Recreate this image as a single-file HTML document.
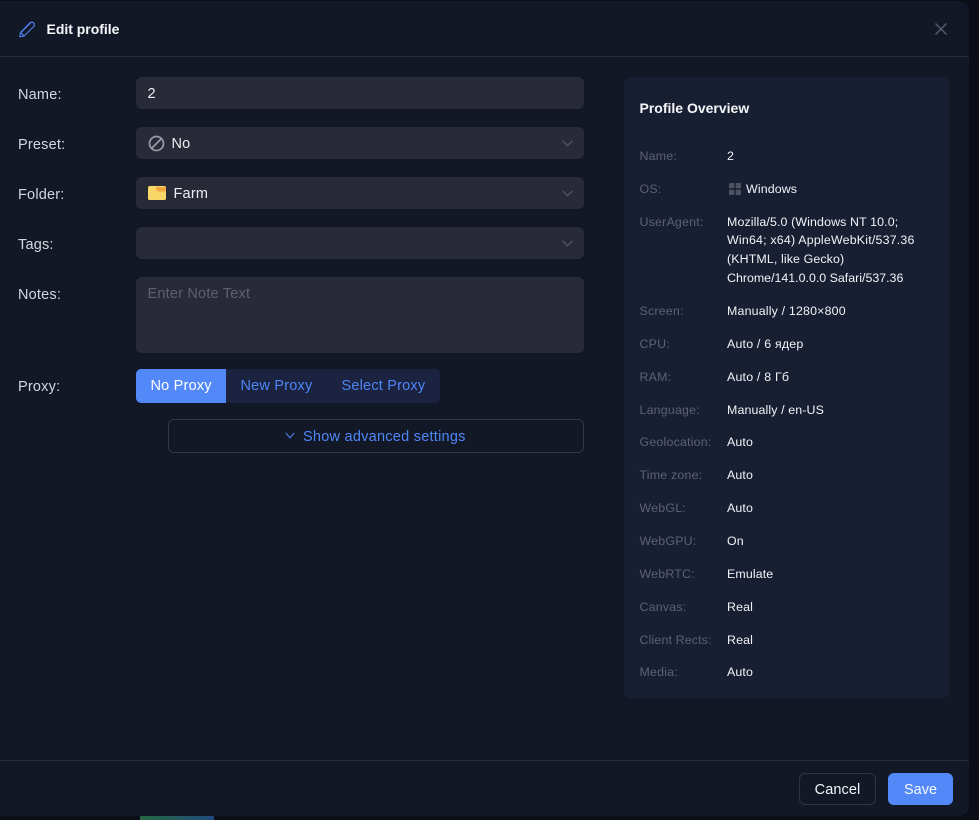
<!DOCTYPE html>
<html><head><meta charset="utf-8">
<style>
html,body{margin:0;padding:0;width:979px;height:820px;overflow:hidden;background:#0b0e16;font-family:"Liberation Sans",sans-serif}
.a{position:absolute;white-space:nowrap}
#modal{position:absolute;left:-10px;top:1px;width:979px;height:815px;background:#121826;border-radius:10px}
.line{position:absolute;left:0;width:969px;height:1px;background:#272b3c}
.lbl{color:#d5d7de;font-size:14.5px;left:18px;letter-spacing:.2px;line-height:18px}
.inp{position:absolute;left:136px;width:448px;height:32px;background:#282b37;border-radius:6px}
.v{color:#eceef2;font-size:14.5px;letter-spacing:.2px;line-height:18px}
.k{color:#5c6178;font-size:12.4px;left:639.5px;line-height:16px;letter-spacing:.2px}
.d{color:#f2f3f6;font-size:12.4px;left:727px;line-height:16px;letter-spacing:.12px}
.seg{color:#4f86f7;font-size:14.5px;letter-spacing:.2px;line-height:18px}
.chev{left:561.5px}
</style></head><body>
<div class="a" style="left:140px;top:816px;width:74px;height:4px;background:linear-gradient(90deg,#25693f,#20497e)"></div>
<div id="modal"></div>
<div class="line" style="top:56px"></div>
<div class="line" style="top:760px"></div>

<svg class="a" style="left:19px;top:21px" width="17" height="17" viewBox="0 0 17 17" fill="none" stroke="#4f7fe8" stroke-width="1.2" stroke-linejoin="round" stroke-linecap="round"><path d="M.8 15.7l.8-4.300L11 1.800a2.400 2.400 0 0 1 3.400 0l.3.300a2.400 2.400 0 0 1 0 3.400L5.100 15z"/><path d="M1.700 11.300l3.300 3.600M3 10.500l8.500-8.500"/></svg>
<div class="a" style="left:46.5px;top:20px;color:#f7f8fa;font-size:14px;font-weight:700;line-height:18px;letter-spacing:-.02px">Edit profile</div>
<svg class="a" style="left:934px;top:22px" width="14" height="14" viewBox="0 0 14 14" stroke="#565b6e" stroke-width="1.5" fill="none"><path d="M1.500 1.500l11 11M12.500 1.500l-11 11"/></svg>

<div class="a lbl" style="top:86px">Name:</div>
<div class="inp" style="top:77px"></div>
<div class="a v" style="left:147.5px;top:84.500px">2</div>

<div class="a lbl" style="top:136px">Preset:</div>
<div class="inp" style="top:127px"></div>
<svg class="a" style="left:147.5px;top:134.500px" width="17" height="17" viewBox="0 0 17 17" fill="none" stroke="#9a9ca8" stroke-width="1.700"><circle cx="8.500" cy="8.500" r="7"/><path d="M3.600 13.400l9.800-9.800"/></svg>
<div class="a v" style="left:171.5px;top:134.500px">No</div>
<svg class="a chev" style="top:140px" width="11" height="7" viewBox="0 0 11 7" fill="none" stroke="#545869" stroke-width="1.200"><path d="M.7 .8l4.800 5 4.800-5"/></svg>

<div class="a lbl" style="top:186px">Folder:</div>
<div class="inp" style="top:177px"></div>
<svg class="a" style="left:148px;top:186px" width="18" height="14" viewBox="0 0 18 14"><rect x="0" y="0" width="18" height="14" rx="1.800" fill="#f8d668"/><path d="M7.500 1H16.200A1.800 1.800 0 0 1 18 2.800V5.500H9.500z" fill="#f2a840"/></svg>
<div class="a v" style="left:173.500px;top:184.500px">Farm</div>
<svg class="a chev" style="top:190px" width="11" height="7" viewBox="0 0 11 7" fill="none" stroke="#545869" stroke-width="1.200"><path d="M.7 .8l4.800 5 4.800-5"/></svg>

<div class="a lbl" style="top:236px">Tags:</div>
<div class="inp" style="top:227px"></div>
<svg class="a chev" style="top:240px" width="11" height="7" viewBox="0 0 11 7" fill="none" stroke="#545869" stroke-width="1.200"><path d="M.7 .8l4.800 5 4.800-5"/></svg>

<div class="a lbl" style="top:286px">Notes:</div>
<div class="inp" style="top:277px;height:76px"></div>
<div class="a v" style="left:147.500px;top:284.500px;color:#5c606f">Enter Note Text</div>

<div class="a lbl" style="top:378px">Proxy:</div>
<div class="a" style="left:136px;top:369px;width:304px;height:34px;background:#1b2340;border-radius:5px"></div>
<div class="a" style="left:136px;top:369px;width:90px;height:34px;background:#5288f8;border-radius:5px 0 0 5px"></div>
<div class="a seg" style="left:150.500px;top:376.500px;color:#fff">No Proxy</div>
<div class="a seg" style="left:240.500px;top:376.500px">New Proxy</div>
<div class="a seg" style="left:341.500px;top:376.500px">Select Proxy</div>

<div class="a" style="left:168px;top:419px;width:414px;height:32px;border:1px solid #33374a;border-radius:6px"></div>
<svg class="a" style="left:285px;top:432px" width="10" height="7" viewBox="0 0 10 7" fill="none" stroke="#4f86f7" stroke-width="1"><path d="M.7 .8L5 5.800 9.300 .8"/></svg>
<div class="a seg" style="left:303px;top:427.500px;letter-spacing:.25px">Show advanced settings</div>

<div class="a" style="left:624px;top:77px;width:325px;height:621px;background:#191f33;border-radius:7px"></div>
<div class="a" style="left:639.500px;top:99px;color:#f5f6f8;font-size:14px;font-weight:700;line-height:18px">Profile Overview</div>

<div class="a k" style="top:148px">Name:</div><div class="a d" style="top:148px">2</div>
<div class="a k" style="top:181px">OS:</div>
<svg class="a" style="left:729px;top:183px" width="12" height="12" viewBox="0 0 12 12" fill="#4d5263"><rect width="5.300" height="5.300" rx=".5"/><rect x="6.700" width="5.300" height="5.300" rx=".5"/><rect y="6.700" width="5.300" height="5.300" rx=".5"/><rect x="6.700" y="6.700" width="5.300" height="5.300" rx=".5"/></svg>
<div class="a d" style="top:181px;left:746px">Windows</div>
<div class="a k" style="top:214px">UserAgent:</div>
<div class="a d" style="top:212.500px;line-height:18.700px">Mozilla/5.0 (Windows NT 10.0;<br><span style="letter-spacing:.2px">Win64; x64) AppleWebKit/537.36</span><br>(KHTML, like Gecko)<br><span style="letter-spacing:0">Chrome/141.0.0.0 Safari/537.36</span></div>
<div class="a k" style="top:303px">Screen:</div><div class="a d" style="top:303px;letter-spacing:.18px">Manually / 1280×800</div>
<div class="a k" style="top:336px">CPU:</div><div class="a d" style="top:336px;letter-spacing:.2px">Auto / 6 ядер</div>
<div class="a k" style="top:369px">RAM:</div><div class="a d" style="top:369px;letter-spacing:.2px">Auto / 8 Гб</div>
<div class="a k" style="top:402px">Language:</div><div class="a d" style="top:402px">Manually / en-US</div>
<div class="a k" style="top:434px">Geolocation:</div><div class="a d" style="top:434px">Auto</div>
<div class="a k" style="top:467px">Time zone:</div><div class="a d" style="top:467px">Auto</div>
<div class="a k" style="top:500px">WebGL:</div><div class="a d" style="top:500px">Auto</div>
<div class="a k" style="top:533px">WebGPU:</div><div class="a d" style="top:533px">On</div>
<div class="a k" style="top:566px">WebRTC:</div><div class="a d" style="top:566px">Emulate</div>
<div class="a k" style="top:599px">Canvas:</div><div class="a d" style="top:599px">Real</div>
<div class="a k" style="top:632px;letter-spacing:.15px">Client Rects:</div><div class="a d" style="top:632px">Real</div>
<div class="a k" style="top:664px">Media:</div><div class="a d" style="top:664px">Auto</div>

<div class="a" style="left:799px;top:773px;width:75px;height:30px;border:1px solid #2f3342;border-radius:6px"></div>
<div class="a" style="left:799px;top:780.500px;width:77px;text-align:center;color:#f3f4f7;font-size:14.500px;line-height:18px;letter-spacing:.1px">Cancel</div>
<div class="a" style="left:888px;top:774px;width:65px;height:31px;background:linear-gradient(#5288f8,#5288f8) 0 -1px/100% 33px no-repeat;border-radius:6px"></div>
<div class="a" style="left:888px;top:773px;width:65px;height:32px;background:#5288f8;border-radius:6px"></div>
<div class="a" style="left:888px;top:780.500px;width:65px;text-align:center;color:#f5f8ff;font-size:14.500px;line-height:18px">Save</div>
</body></html>
